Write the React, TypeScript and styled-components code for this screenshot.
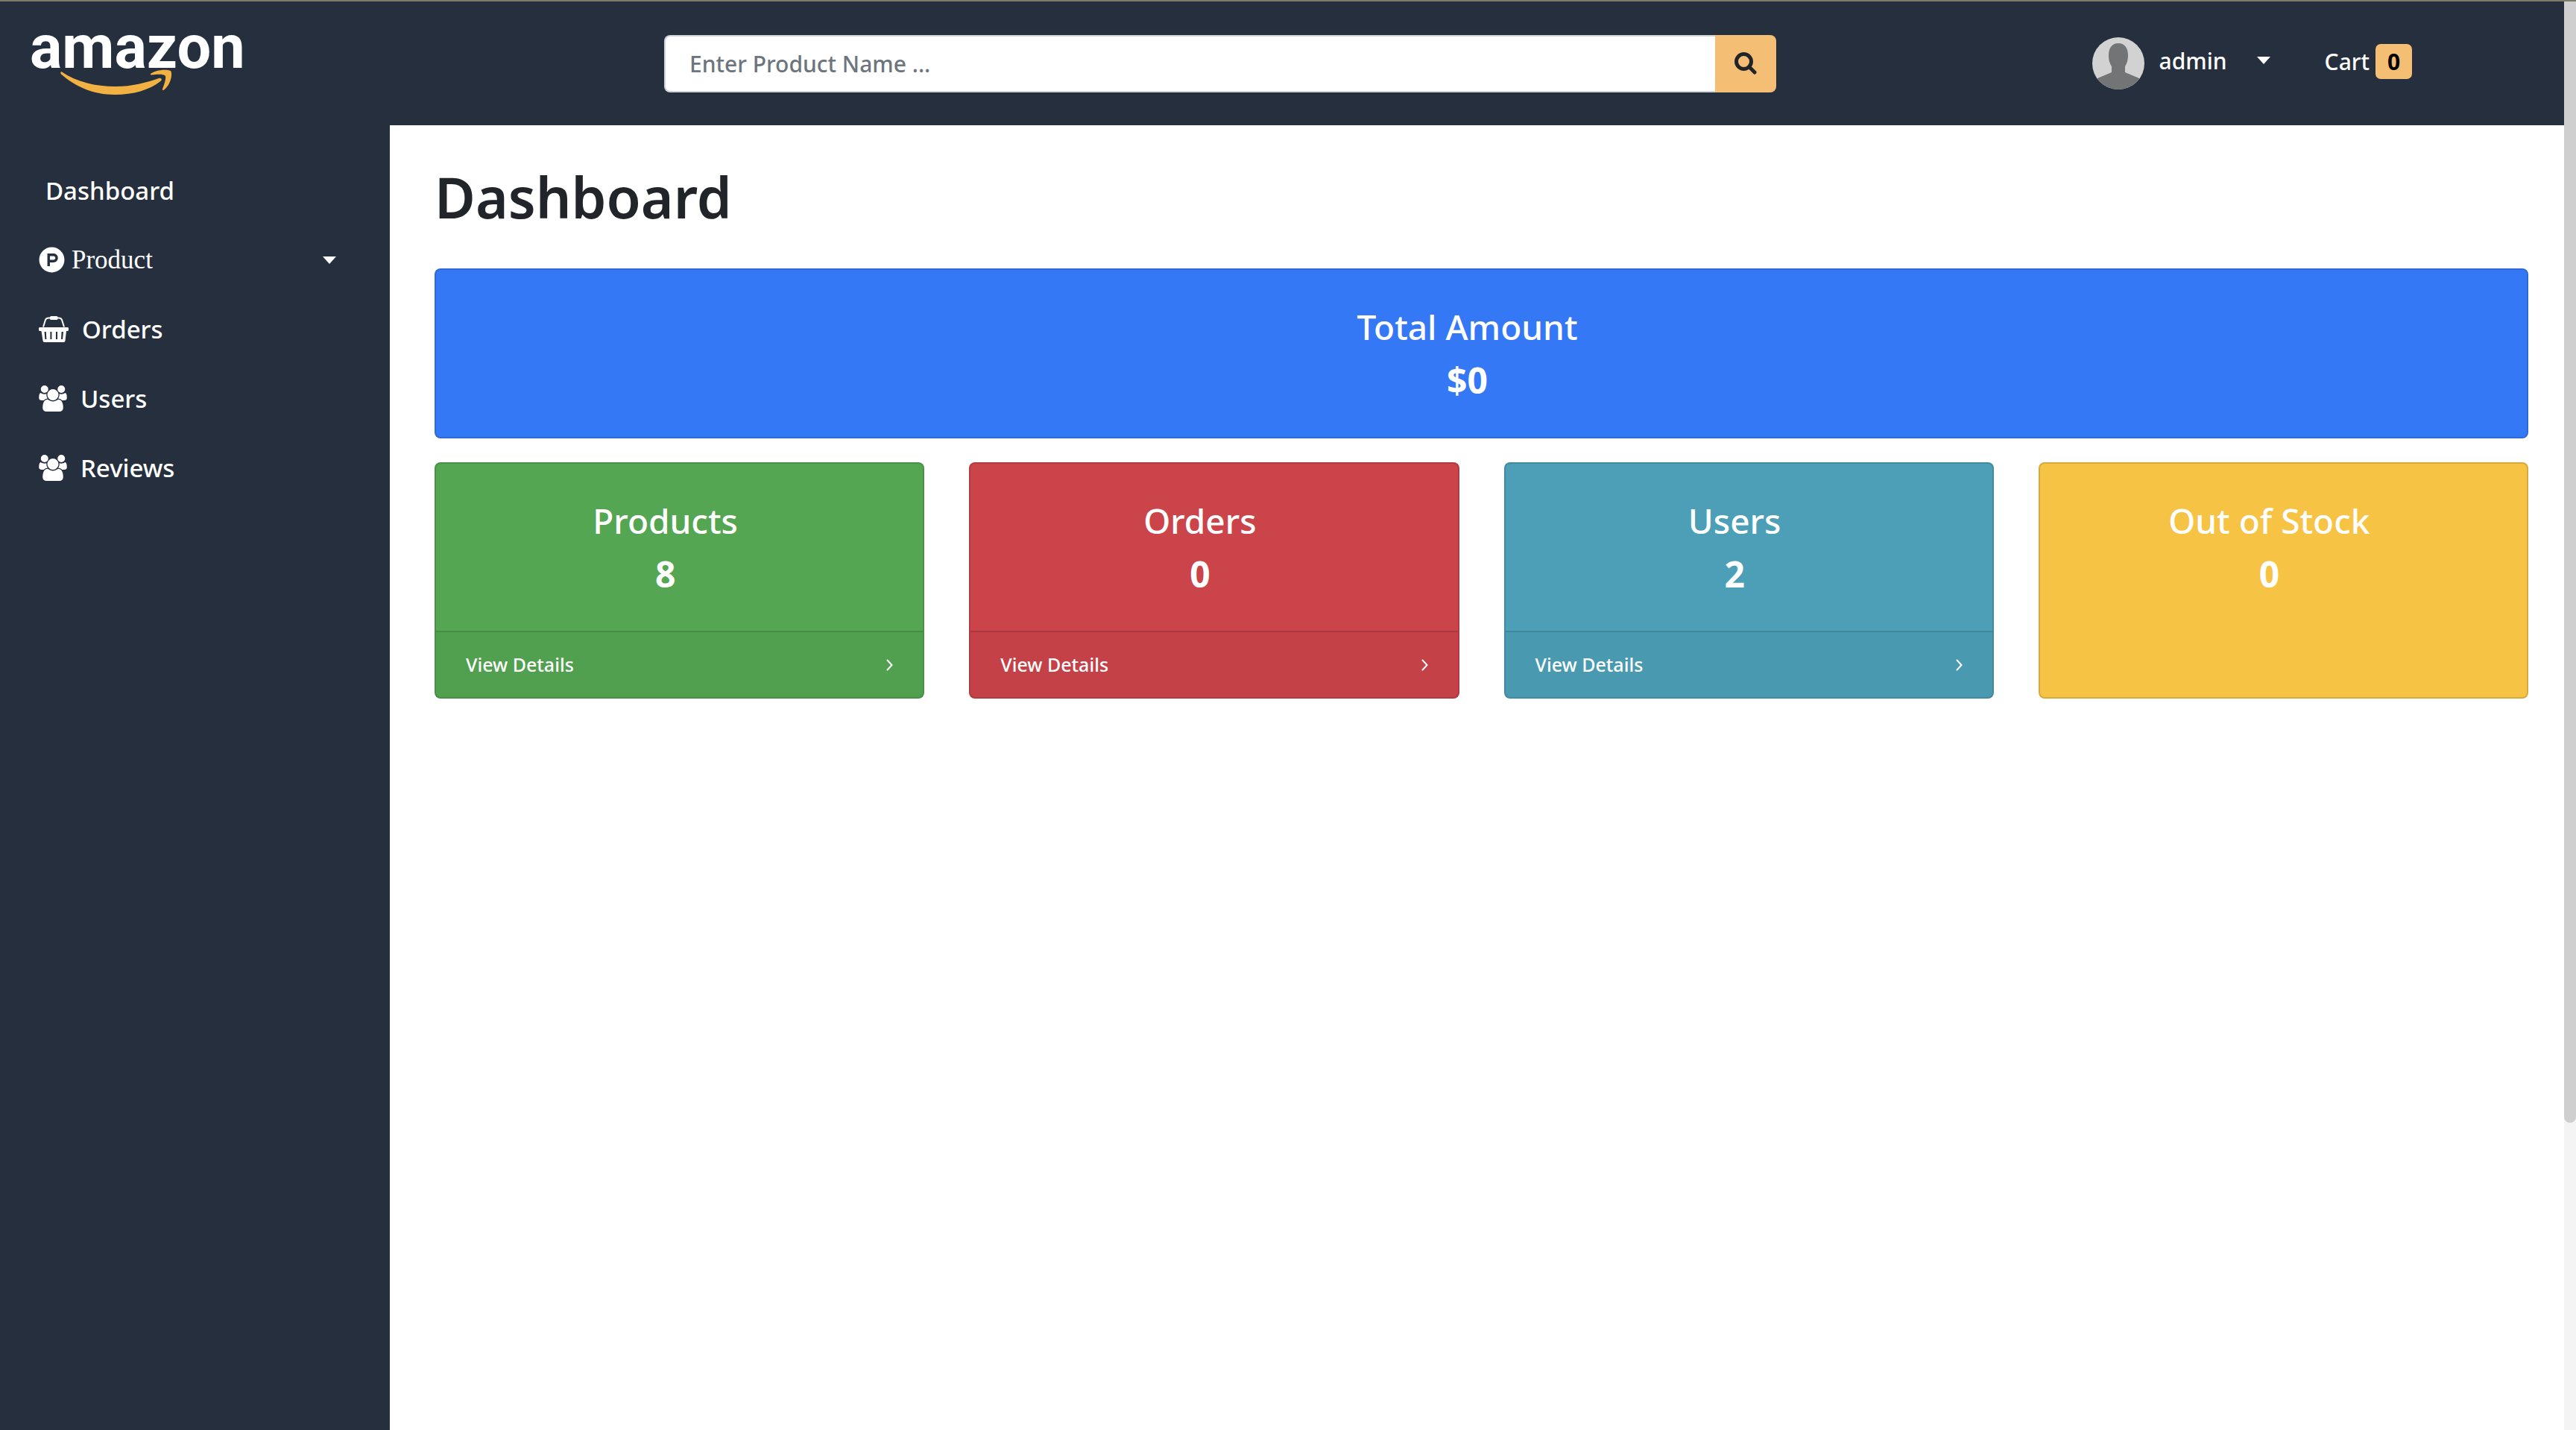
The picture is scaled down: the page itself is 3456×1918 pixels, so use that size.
import React from 'react';
import styled, { createGlobalStyle } from 'styled-components';
import { FaProductHunt } from 'react-icons/fa';

const NAVY = '#252f3d';
const AMBER = '#f4bf75';

const GlobalStyle = createGlobalStyle`
  *, *::before, *::after { box-sizing: border-box; }
  body {
    margin: 0;
    background: #fff;
    color: #212529;
    font-family: "Noto Sans", "Open Sans", sans-serif;
    font-size: 30px;
    font-weight: 500;
  }
  a { color: inherit; text-decoration: none; }
  button { border: 0; background: none; color: inherit; font: inherit; cursor: pointer; }
  h1, p { margin: 0; }
`;

const Screen = styled.div`
  display: grid;
  grid-template-columns: minmax(0, 1fr) 16px;
  min-height: 100vh;
  border-top: 2px solid #7c7a6c;
`;

const Page = styled.div`
  display: grid;
  grid-template-rows: 166px 1fr;
`;

const Scrollbar = styled.div`
  background: #f4f4f4;
`;

const Thumb = styled.div`
  height: 78.5%;
  border-radius: 0 0 8px 8px;
  background: #cfcfcf;
`;

const Header = styled.header`
  display: grid;
  grid-template-columns: 1fr 2fr 1fr;
  align-items: center;
  background: ${NAVY};
  color: #fff;
`;

const Logo = styled.a`
  display: flex;
  flex-direction: column;
  align-items: flex-start;
  padding: 0 0 8px 40px;
`;

const Wordmark = styled.span`
  font-family: Roboto, "Liberation Sans", sans-serif;
  font-size: 81px;
  font-weight: 700;
  line-height: 58px;
`;

const Smile = styled.svg`
  width: 150px;
  height: 35px;
  margin-left: 41px;
`;

const SearchForm = styled.form`
  display: flex;
  width: 100%;
  max-width: 1523px;
  height: 77px;
  padding-left: 31px;
`;

const SearchInput = styled.input`
  flex: 1;
  min-width: 0;
  padding: 0 32px;
  border: 2px solid #ced4da;
  border-right: 0;
  border-radius: 8px 0 0 8px;
  background: #fff;
  color: #495057;
  font: inherit;
  &::placeholder { color: #6c757d; opacity: 1; }
`;

const SearchButton = styled.button`
  display: flex;
  align-items: center;
  justify-content: center;
  width: 82px;
  padding: 0;
  border-radius: 0 8px 8px 0;
  background: ${AMBER};
  svg { width: 30px; height: 30px; }
`;

const Account = styled.nav`
  display: flex;
  align-items: center;
  justify-content: flex-end;
  gap: 73px;
  padding-right: 204px;
`;

const UserMenu = styled.button`
  display: flex;
  align-items: center;
  padding: 0;
`;

const Avatar = styled.svg`
  width: 70px;
  height: 70px;
  border-radius: 50%;
`;

const UserName = styled.span`
  padding: 0 40px 8px 20px;
`;

const Caret = styled.span<{ $raised?: boolean }>`
  width: 0;
  height: 0;
  margin-bottom: ${p => (p.$raised ? 8 : 0)}px;
  border: solid transparent;
  border-width: 10px 9px 0;
  border-top-color: #fff;
`;

const CartLink = styled.a`
  display: flex;
  align-items: center;
  gap: 8px;
  padding-bottom: 6px;
`;

const Badge = styled.span`
  min-width: 49px;
  border-radius: 7px;
  background: ${AMBER};
  color: #000;
  font-weight: 700;
  line-height: 47px;
  text-align: center;
`;

const Body = styled.div`
  display: grid;
  grid-template-columns: 523px minmax(0, 1fr);
`;

const Sidebar = styled.nav`
  padding-top: 41px;
  background: ${NAVY};
  color: #fff;
  font-size: 33px;
`;

const Menu = styled.ul`
  margin: 0;
  padding: 0;
  list-style: none;
`;

const MenuLink = styled.a<{ $plain?: boolean }>`
  display: flex;
  align-items: center;
  gap: 18px;
  height: 93px;
  padding-left: ${p => (p.$plain ? 61 : 52)}px;
  svg { flex: none; height: 35px; }
`;

const MenuToggle = styled.button`
  display: flex;
  align-items: center;
  gap: 9px;
  width: 100%;
  height: 93px;
  padding: 0 72px 0 52px;
  font-family: "Liberation Serif", serif;
  font-size: 35px;
  font-weight: 400;
  span:last-child { margin-left: auto; }
`;

const Disc = styled(FaProductHunt)`
  width: 35px;
  height: 35px;
`;

const Main = styled.main`
  padding: 48px 48px 48px 60px;
`;

const Title = styled.h1`
  margin-bottom: 48px;
  font-size: 75px;
  font-weight: 600;
  line-height: 96px;
`;

const Cards = styled.div`
  display: grid;
  grid-template-columns: repeat(4, minmax(0, 1fr));
  gap: 32px 60px;
`;

const Card = styled.section<{ $tone: string; $wide?: boolean }>`
  display: flex;
  flex-direction: column;
  grid-column: ${p => (p.$wide ? '1 / -1' : 'auto')};
  border: 2px solid rgba(0, 0, 0, 0.125);
  border-radius: 8px;
  background: ${p => p.$tone};
  color: #fff;
`;

const CardBody = styled.div`
  flex: 1;
  padding: 40px 78px 40px 40px;
  font-size: 46px;
  line-height: 72px;
  text-align: center;
`;

const Figure = styled.p`
  font-size: 48px;
  font-weight: 700;
`;

const CardFooter = styled.a`
  display: flex;
  align-items: center;
  justify-content: space-between;
  padding: 24px 40px;
  border-top: 2px solid rgba(0, 0, 0, 0.125);
  background: rgba(0, 0, 0, 0.03);
  font-size: 25px;
  line-height: 39px;
  svg { width: 9px; height: 16px; }
`;

const BasketIcon = () => (
  <svg viewBox="0 0 40 35" width="40" aria-hidden="true">
    <path d="M6 14.5 9 5Q10 2.500 13 2.500H27Q30 2.500 31 5L34 14.500" fill="none" stroke="#fff" strokeWidth="2" />
    <rect x="15" y="0" width="10.500" height="5" rx="1.500" fill="#fff" />
    <path
      fillRule="evenodd"
      fill="#fff"
      d="M2 15H38A2.500 2.500 0 0 1 38 20H37L35.500 33Q35.200 35 33.500 35H7.500Q5.800 35 5.500 33L3.500 20H2A2.500 2.500 0 0 1 2 15ZM7.600 21 8.400 31H10.400L9.800 21ZM15.400 21V31H17.400V21ZM23 21V31H25V21ZM30.600 21 30 31H32L33 21Z"
    />
  </svg>
);

const PeopleIcon = () => (
  <svg viewBox="0 0 1920 1792" width="38" fill="#fff" aria-hidden="true">
    <path d="M593 896q-162 5-265 128h-134q-82 0-138-40.5t-56-118.5q0-353 124-353 6 0 43.5 21t97.5 42.5 119 21.5q67 0 133-23-5 37-5 66 0 139 81 256zm1071 637q0 120-73 189.5t-194 69.5h-874q-121 0-194-69.5t-73-189.5q0-53 3.5-103.5t14-109 26.5-108.5 43-97.5 62-81 85.5-53.5 111.5-20q10 0 43 21.5t73 48 107 48 135 21.5 135-21.5 107-48 73-48 43-21.5q61 0 111.5 20t85.5 53.5 62 81 43 97.5 26.5 108.5 14 109 3.5 103.5zm-1024-1277q0 106-75 181t-181 75-181-75-75-181 75-181 181-75 181 75 75 181zm704 384q0 159-112.5 271.5t-271.5 112.5-271.5-112.5-112.5-271.5 112.5-271.5 271.5-112.5 271.5 112.5 112.5 271.5zm576 225q0 78-56 118.5t-138 40.5h-134q-103-123-265-128 81-117 81-256 0-29-5-66 66 23 133 23 59 0 119-21.5t97.5-42.5 43.5-21q124 0 124 353zm-128-609q0 106-75 181t-181 75-181-75-75-181 75-181 181-75 181 75 75 181z" />
  </svg>
);

const AngleIcon = () => (
  <svg viewBox="0 0 9 16" aria-hidden="true">
    <path d="M1.500 1.500 7.500 8 1.500 14.500" fill="none" stroke="#fff" strokeWidth="2" strokeLinecap="round" />
  </svg>
);

const links = [
  { label: 'Orders', Icon: BasketIcon },
  { label: 'Users', Icon: PeopleIcon },
  { label: 'Reviews', Icon: PeopleIcon },
];

const cards = [
  { label: 'Total Amount', value: '$0', tone: '#3578f6', wide: true, details: false },
  { label: 'Products', value: '8', tone: '#54a652', wide: false, details: true },
  { label: 'Orders', value: '0', tone: '#cb444a', wide: false, details: true },
  { label: 'Users', value: '2', tone: '#4c9fb6', wide: false, details: true },
  { label: 'Out of Stock', value: '0', tone: '#f6c344', wide: false, details: false },
];

export default function App() {
  return (
    <>
      <GlobalStyle />
      <Screen>
        <Page>
          <Header>
            <Logo href="#">
              <Wordmark>amazon</Wordmark>
              <Smile viewBox="81 93 150 35" fill="#f2b143" aria-hidden="true">
                <path d="M83 96.500C103 110 128 116 155 116C177 116 196 111 213 105C216 104 218 106.500 216 108.500C200 121 179 127 154 127C125 127 101 116 82 99.500C80.500 98 81.500 95.800 83 96.500Z" />
                <path d="M202 99C207 94.500 222 92 229 95C232 99 229 114 220 120.500C218.500 121.500 217.500 121 218 119.500C220 114 223 106 222 102C220 99 210 99.500 203.500 100.500C202 100.700 201.500 99.800 202 99Z" />
              </Smile>
            </Logo>
            <SearchForm role="search" onSubmit={e => e.preventDefault()}>
              <SearchInput type="text" aria-label="Product name" placeholder="Enter Product Name ..." />
              <SearchButton type="submit" aria-label="Search">
                <svg viewBox="0 0 30 30" fill="none" stroke="#212529" strokeWidth="5">
                  <circle cx="12.500" cy="12.500" r="10" />
                  <path d="M20 20 27 27" strokeLinecap="round" />
                </svg>
              </SearchButton>
            </SearchForm>
            <Account>
              <UserMenu type="button">
                <Avatar viewBox="0 0 70 70" aria-hidden="true">
                  <rect width="70" height="70" fill="#d2d2d2" />
                  <path
                    fill="#737475"
                    d="M35 8C43 8 48 14 48 24C48 31 46.500 35 44 39V47L63 55L70 60V70H0V60L7 55L26 47V39C23.500 35 22 31 22 24C22 14 27 8 35 8Z"
                  />
                </Avatar>
                <UserName>admin</UserName>
                <Caret $raised />
              </UserMenu>
              <CartLink href="#">
                Cart <Badge>0</Badge>
              </CartLink>
            </Account>
          </Header>
          <Body>
            <Sidebar>
              <Menu>
                <li>
                  <MenuLink href="#" $plain>Dashboard</MenuLink>
                </li>
                <li>
                  <MenuToggle type="button">
                    <Disc aria-hidden="true" />
                    <span>Product</span>
                    <Caret />
                  </MenuToggle>
                </li>
                {links.map(({ label, Icon }) => (
                  <li key={label}>
                    <MenuLink href="#">
                      <Icon />
                      {label}
                    </MenuLink>
                  </li>
                ))}
              </Menu>
            </Sidebar>
            <Main>
              <Title>Dashboard</Title>
              <Cards>
                {cards.map(card => (
                  <Card key={card.label} $tone={card.tone} $wide={card.wide}>
                    <CardBody>
                      <p>{card.label}</p>
                      <Figure>{card.value}</Figure>
                    </CardBody>
                    {card.details && (
                      <CardFooter href="#">
                        View Details
                        <AngleIcon />
                      </CardFooter>
                    )}
                  </Card>
                ))}
              </Cards>
            </Main>
          </Body>
        </Page>
        <Scrollbar>
          <Thumb />
        </Scrollbar>
      </Screen>
    </>
  );
}
